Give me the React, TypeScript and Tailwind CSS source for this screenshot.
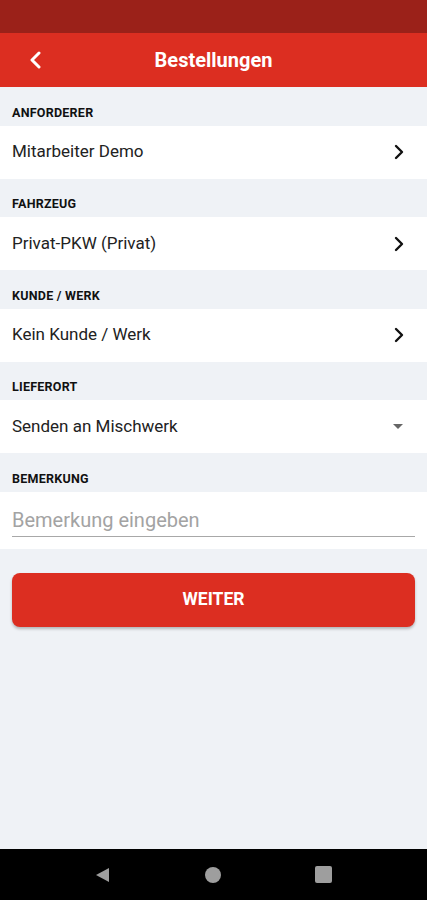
import React from 'react';

// Abschnittsüberschrift (grauer Streifen)
const SectionLabel = ({ children }: { children: React.ReactNode }) => (
    <div className="h-[38.5px] flex items-end px-3 pb-[3px]">
        <span className="text-[12.5px] font-bold tracking-[0.02em] text-[#111]">{children}</span>
    </div>
);

const Chevron = () => (
    <svg width="12" height="16" viewBox="0 0 12 16" fill="none">
        <path d="M3 2 L9 8 L3 14" stroke="#111" strokeWidth="2.4" strokeLinecap="round" strokeLinejoin="round" />
    </svg>
);

const NavRow = ({ label }: { label: string }) => (
    <div className="h-[53px] bg-white flex items-center justify-between pl-3 pr-[22px]">
        <span className="text-[17px] text-[#222]">{label}</span>
        <Chevron />
    </div>
);

export default function App() {
    return (
        <div className="h-[900px] w-full flex flex-col bg-[#eff2f6] overflow-hidden" style={{ fontFamily: 'Roboto, "Noto Sans", sans-serif' }}>
            {/* Statusleiste */}
            <div className="h-[33px] bg-[#9b2119] shrink-0" />

            {/* Kopfzeile */}
            <header className="h-[54px] bg-[#dc2e21] flex items-center relative shrink-0">
                <div className="absolute left-[28px] top-1/2 -translate-y-1/2">
                    <svg width="16" height="18" viewBox="0 0 16 18" fill="none">
                        <path d="M11 2 L4 9 L11 16" stroke="white" strokeWidth="3" strokeLinecap="round" strokeLinejoin="round" />
                    </svg>
                </div>
                <h1 className="flex-1 text-center text-white text-[20px] font-bold">Bestellungen</h1>
            </header>

            <SectionLabel>ANFORDERER</SectionLabel>
            <NavRow label="Mitarbeiter Demo" />

            <SectionLabel>FAHRZEUG</SectionLabel>
            <NavRow label="Privat-PKW (Privat)" />

            <SectionLabel>KUNDE / WERK</SectionLabel>
            <NavRow label="Kein Kunde / Werk" />

            <SectionLabel>LIEFERORT</SectionLabel>
            <div className="h-[53px] bg-white flex items-center justify-between pl-3 pr-[24px]">
                <span className="text-[17px] text-[#222]">Senden an Mischwerk</span>
                <svg width="10" height="5" viewBox="0 0 10 5">
                    <path d="M0 0 L10 0 L5 5 Z" fill="#666" />
                </svg>
            </div>

            <SectionLabel>BEMERKUNG</SectionLabel>
            <div className="h-[57px] bg-white px-3 pt-[13px]">
                <div className="border-b border-[#a8a8a8] h-[32px] flex items-center">
                    <span className="text-[20px] text-[#a3a3a3]">Bemerkung eingeben</span>
                </div>
            </div>

            <div className="px-3 mt-6">
                <button className="w-full h-[54px] rounded-lg bg-[#dc2e21] text-white text-[17.5px] font-bold shadow-[0_2px_3px_rgba(0,0,0,0.25)]">
                    WEITER
                </button>
            </div>

            <div className="flex-1" />

            {/* Navigationsleiste */}
            <div className="h-[51px] bg-black shrink-0 flex items-center justify-center gap-[94px]">
                <svg width="16" height="16" viewBox="0 0 16 16">
                    <path d="M1 8 L14 1 L14 15 Z" fill="#9e9e9e" />
                </svg>
                <div className="w-[16px] h-[16px] rounded-full bg-[#9e9e9e]" />
                <div className="w-[17px] h-[17px] rounded-[2px] bg-[#9e9e9e]" />
            </div>
        </div>
    );
}
